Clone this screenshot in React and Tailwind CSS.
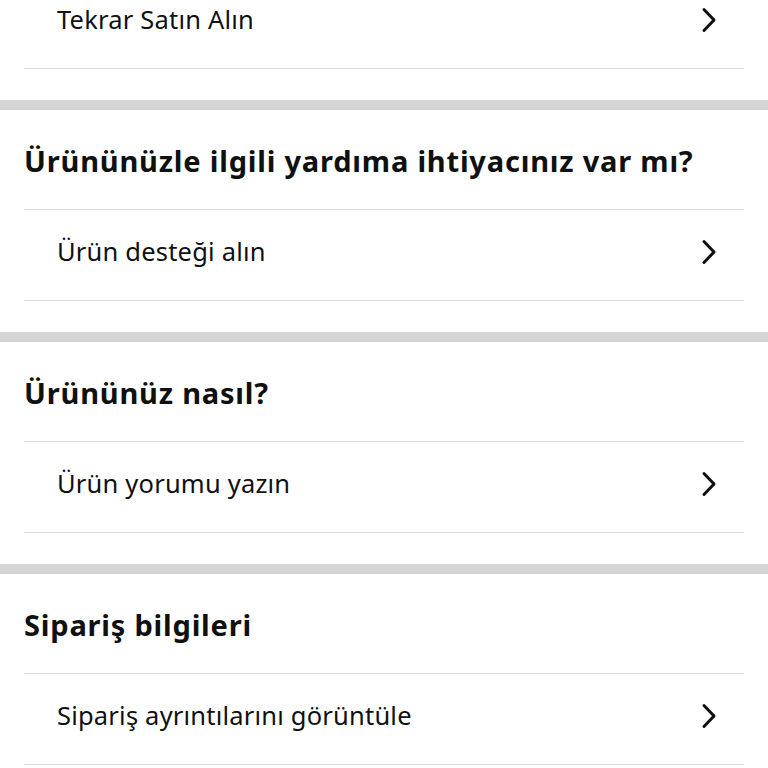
import React from 'react';

const Chevron = () => (
    <svg className="w-[16px] h-[26px]" viewBox="0 0 16 26" fill="none" stroke="#0f1111" strokeWidth={3} strokeLinecap="round" strokeLinejoin="round">
        <path d="M3 2.5l10 10.5-10 10.5" />
    </svg>
);

const Row = ({ label }) => (
    <div className="h-[91px] flex items-center justify-between pl-[33px] pr-[27px] pb-[6px] border-b border-[#d5d9d9]">
        <span className="text-[25.5px] tracking-[0.2px] text-[#0f1111] leading-none">{label}</span>
        <Chevron />
    </div>
);

const Section = ({ title, label }) => (
    <div>
        <div className="h-[10px] bg-[#d5d5d5]" />
        <div className="px-[24px]">
            <div className="h-[100px] flex items-center pt-[2px] border-b border-[#d5d9d9]">
                <h2 className="text-[29px] tracking-[0.8px] font-bold text-[#0f1111] leading-none">{title}</h2>
            </div>
            <Row label={label} />
        </div>
        <div className="h-[31px]" />
    </div>
);

const App = () => {
    const sections = [
        { title: 'Ürününüzle ilgili yardıma ihtiyacınız var mı?', label: 'Ürün desteği alın' },
        { title: 'Ürününüz nasıl?', label: 'Ürün yorumu yazın' },
        { title: 'Sipariş bilgileri', label: 'Sipariş ayrıntılarını görüntüle' },
    ];

    return (
        <div className="w-[768px] h-[768px] overflow-hidden bg-white" style={{ fontFamily: '"Noto Sans", "Open Sans", sans-serif' }}>
            <div className="mt-[-22px]">
                {/* Previous item, partly scrolled off */}
                <div className="px-[24px]">
                    <Row label="Tekrar Satın Alın" />
                </div>
                <div className="h-[31px]" />

                {sections.map((s, i) => (
                    <Section key={i} title={s.title} label={s.label} />
                ))}
            </div>
        </div>
    );
};

export default App;
